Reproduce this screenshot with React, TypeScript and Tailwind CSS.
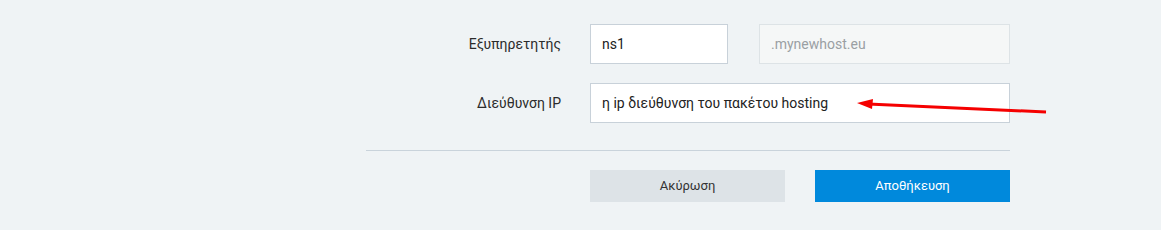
export default function App() {
  return (
    <div
      className="relative w-[1161px] h-[230px] bg-[#eff3f5] overflow-hidden"
      style={{ fontFamily: "Roboto, 'Noto Sans', sans-serif" }}
    >
      <div className="ml-[366px] w-[644px] pt-[24px]">
        {/* Server row */}
        <div className="flex items-center">
          <label className="w-[195px] text-right text-[14px] text-[#2b2b2b]">Εξυπηρετητής</label>
          <div className="ml-[29px] flex gap-[31px]">
            <input
              readOnly
              value="ns1"
              className="w-[138px] h-[40px] bg-white border border-[#c8d1d9] px-[11px] text-[14px] text-[#222] outline-none"
            />
            <input
              readOnly
              value=".mynewhost.eu"
              className="w-[251px] h-[40px] bg-[#f5f7f7] border border-[#dde3e6] px-[11px] text-[14px] text-[#9a9fa3] outline-none"
            />
          </div>
        </div>

        {/* IP row */}
        <div className="flex items-center mt-[19px]">
          <label className="w-[195px] text-right text-[14px] text-[#2b2b2b]">Διεύθυνση IP</label>
          <input
            readOnly
            value="η ip διεύθυνση του πακέτου hosting"
            className="ml-[29px] w-[420px] h-[40px] bg-white border border-[#c8d1d9] px-[11px] text-[14px] text-[#222] outline-none"
          />
        </div>

        <div className="mt-[27px] h-px bg-[#c9d3db]" />

        <div className="flex justify-end gap-[30px] mt-[19px]">
          <button className="w-[195px] h-[32px] bg-[#dde3e7] text-[13px] text-[#333]">Ακύρωση</button>
          <button className="w-[195px] h-[32px] bg-[#0089dc] text-[13px] text-white">Αποθήκευση</button>
        </div>
      </div>

      {/* annotation arrow */}
      <svg className="absolute left-0 top-0 pointer-events-none" width="1161" height="230">
        <line x1="1046" y1="112" x2="868" y2="104" stroke="#f50000" strokeWidth="3" />
        <polygon points="857,103 873,99 872,109" fill="#f50000" />
      </svg>
    </div>
  );
}
